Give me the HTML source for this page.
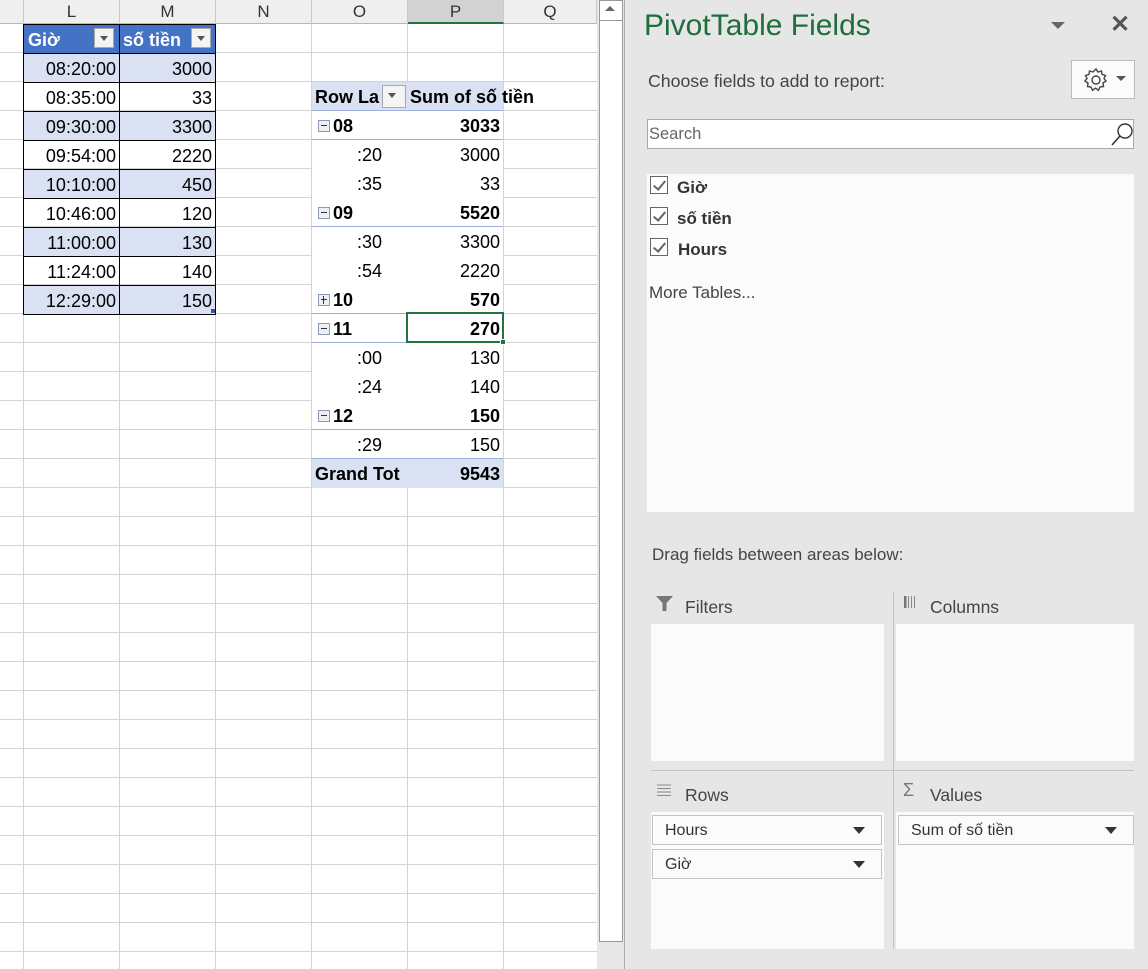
<!DOCTYPE html>
<html><head><meta charset="utf-8"><style>
*{margin:0;padding:0;box-sizing:border-box}
body{width:1148px;height:969px;position:relative;overflow:hidden;background:#fff;font-family:"Liberation Sans",sans-serif;}
.a{position:absolute}
.grid{left:0;top:24px;width:597px;height:945px;background:repeating-linear-gradient(to bottom,transparent 0 28px,#d4d4d4 28px 29px)}
.vl{position:absolute;top:0;width:1px;height:969px;background:#d4d4d4}
.ch{position:absolute;top:0;height:24px;background:#efefef;border-right:1px solid #c8c8c8;border-bottom:1px solid #b8b8b8;text-align:center;font-size:17px;line-height:24px;color:#333}
.c{position:absolute;height:29px;font-size:18px;line-height:30px;color:#000;white-space:nowrap}
.r{text-align:right;padding-right:3px}
.tb{border:1px solid #000}
.b{font-weight:bold}
.dd{position:absolute;width:20px;height:20px;border:1px solid #aaa;background:#f4f4f4}
.dd:after{content:"";position:absolute;left:5px;top:7px;border-left:4px solid transparent;border-right:4px solid transparent;border-top:5px solid #555}
.ex{position:absolute;width:12px;height:12px;border:1px solid #8a9ab8;background:#eef0f6;left:318px}
.ex:before{content:"";position:absolute;left:2px;top:4px;width:6px;height:1px;background:#333}
.pl:after{content:"";position:absolute;left:4px;top:1px;width:1px;height:8px;background:#333}
.pane{left:627px;top:0;width:521px;height:969px;background:#e6e6e6}
.pt{font-size:17px;color:#444}
.box{position:absolute;background:#fbfbfb}
.fld{position:absolute;height:30px;background:#fbfbfb;border:1px solid #c3c3c3;font-size:16px;line-height:30px;padding-left:12px;color:#333}
.fld:after{content:"";position:absolute;right:16px;top:11px;border-left:6px solid transparent;border-right:6px solid transparent;border-top:7px solid #333}
.cb{position:absolute;left:650px;width:18px;height:18px;border:1px solid #666;background:#fff}
.cb:after{content:"";position:absolute;left:5px;top:1px;width:5px;height:10px;border-right:2px solid #666;border-bottom:2px solid #666;transform:rotate(40deg)}
</style></head><body>
<div class="a grid"></div>
<div class="vl" style="left:23px"></div><div class="vl" style="left:119px"></div><div class="vl" style="left:215px"></div><div class="vl" style="left:311px"></div><div class="vl" style="left:407px"></div><div class="vl" style="left:503px"></div>
<div class="ch" style="left:0;width:24px"></div>
<div class="ch" style="left:24px;width:96px">L</div>
<div class="ch" style="left:120px;width:96px">M</div>
<div class="ch" style="left:216px;width:96px">N</div>
<div class="ch" style="left:312px;width:96px">O</div>
<div class="ch" style="left:408px;width:96px;background:#d2d2d2;border-bottom:2px solid #217346">P</div>
<div class="ch" style="left:504px;width:93px">Q</div>

<div class="c tb b" style="left:23px;top:24px;width:97px;height:30px;background:#4472c4;color:#fff;padding-left:4px">Giờ</div>
<div class="c tb b" style="left:119px;top:24px;width:97px;height:30px;background:#4472c4;color:#fff;padding-left:3px">số tiền</div>
<div class="dd" style="left:94px;top:28px"></div><div class="dd" style="left:191px;top:28px"></div>
<div class="c tb r" style="left:23px;top:53px;width:97px;height:30px;background:#d9e1f2">08:20:00</div><div class="c tb r" style="left:119px;top:53px;width:97px;height:30px;background:#d9e1f2">3000</div>
<div class="c tb r" style="left:23px;top:82px;width:97px;height:30px">08:35:00</div><div class="c tb r" style="left:119px;top:82px;width:97px;height:30px">33</div>
<div class="c tb r" style="left:23px;top:111px;width:97px;height:30px;background:#d9e1f2">09:30:00</div><div class="c tb r" style="left:119px;top:111px;width:97px;height:30px;background:#d9e1f2">3300</div>
<div class="c tb r" style="left:23px;top:140px;width:97px;height:30px">09:54:00</div><div class="c tb r" style="left:119px;top:140px;width:97px;height:30px">2220</div>
<div class="c tb r" style="left:23px;top:169px;width:97px;height:30px;background:#d9e1f2">10:10:00</div><div class="c tb r" style="left:119px;top:169px;width:97px;height:30px;background:#d9e1f2">450</div>
<div class="c tb r" style="left:23px;top:198px;width:97px;height:30px">10:46:00</div><div class="c tb r" style="left:119px;top:198px;width:97px;height:30px">120</div>
<div class="c tb r" style="left:23px;top:227px;width:97px;height:30px;background:#d9e1f2">11:00:00</div><div class="c tb r" style="left:119px;top:227px;width:97px;height:30px;background:#d9e1f2">130</div>
<div class="c tb r" style="left:23px;top:256px;width:97px;height:30px">11:24:00</div><div class="c tb r" style="left:119px;top:256px;width:97px;height:30px">140</div>
<div class="c tb r" style="left:23px;top:285px;width:97px;height:30px;background:#d9e1f2">12:29:00</div><div class="c tb r" style="left:119px;top:285px;width:97px;height:30px;background:#d9e1f2">150</div>
<div class="a" style="left:211px;top:309px;width:4px;height:4px;background:#3a55a0"></div>

<div class="a" style="left:312px;top:82px;width:191px;height:406px;background:#fff"></div>
<div class="a" style="left:312px;top:82px;width:191px;height:29px;background:#d9e1f2;border-bottom:1px solid #9bb0dc"></div>
<div class="c b" style="left:315px;top:82px;width:65px;overflow:hidden">Row Labels</div>
<div class="dd" style="left:382px;top:85px;width:24px;height:23px"></div>
<div class="c b" style="left:410px;top:82px">Sum of số tiền</div>
<div class="a" style="left:312px;top:139px;width:191px;height:1px;background:#9bb0dc"></div>
<div class="a" style="left:312px;top:226px;width:191px;height:1px;background:#9bb0dc"></div>
<div class="a" style="left:312px;top:313px;width:191px;height:1px;background:#9bb0dc"></div>
<div class="a" style="left:312px;top:342px;width:191px;height:1px;background:#9bb0dc"></div>
<div class="a" style="left:312px;top:429px;width:191px;height:1px;background:#9bb0dc"></div>
<div class="a" style="left:312px;top:458px;width:191px;height:30px;background:#d9e1f2;border-top:1px solid #9bb0dc"></div>

<div class="ex" style="top:120px"></div><div class="c b" style="left:333px;top:111px">08</div><div class="c b r" style="left:407px;top:111px;width:96px">3033</div>
<div class="c" style="left:357px;top:140px">:20</div><div class="c r" style="left:407px;top:140px;width:96px">3000</div>
<div class="c" style="left:357px;top:169px">:35</div><div class="c r" style="left:407px;top:169px;width:96px">33</div>
<div class="ex" style="top:207px"></div><div class="c b" style="left:333px;top:198px">09</div><div class="c b r" style="left:407px;top:198px;width:96px">5520</div>
<div class="c" style="left:357px;top:227px">:30</div><div class="c r" style="left:407px;top:227px;width:96px">3300</div>
<div class="c" style="left:357px;top:256px">:54</div><div class="c r" style="left:407px;top:256px;width:96px">2220</div>
<div class="ex pl" style="top:294px"></div><div class="c b" style="left:333px;top:285px">10</div><div class="c b r" style="left:407px;top:285px;width:96px">570</div>
<div class="ex" style="top:323px"></div><div class="c b" style="left:333px;top:314px">11</div><div class="c b r" style="left:407px;top:314px;width:96px">270</div>
<div class="c" style="left:357px;top:343px">:00</div><div class="c r" style="left:407px;top:343px;width:96px">130</div>
<div class="c" style="left:357px;top:372px">:24</div><div class="c r" style="left:407px;top:372px;width:96px">140</div>
<div class="ex" style="top:410px"></div><div class="c b" style="left:333px;top:401px">12</div><div class="c b r" style="left:407px;top:401px;width:96px">150</div>
<div class="c" style="left:357px;top:430px">:29</div><div class="c r" style="left:407px;top:430px;width:96px">150</div>
<div class="c b" style="left:315px;top:459px">Grand Tot</div><div class="c b r" style="left:407px;top:459px;width:96px">9543</div>
<div class="a" style="left:406px;top:312px;width:98px;height:31px;border:2px solid #217346"></div>
<div class="a" style="left:500px;top:339px;width:6px;height:6px;background:#217346;border:1px solid #fff"></div>

<div class="a" style="left:597px;top:0;width:30px;height:969px;background:#e8e8e8"></div>
<div class="a" style="left:599px;top:0;width:24px;height:942px;background:#fff;border:1px solid #999"></div>
<div class="a" style="left:599px;top:20px;width:24px;height:1px;background:#999"></div>
<div class="a" style="left:605px;top:6px;border-left:5px solid transparent;border-right:5px solid transparent;border-bottom:5px solid #666"></div>
<div class="a" style="left:624px;top:0;width:1px;height:969px;background:#aaa"></div>

<div class="a pane"></div>
<div class="a" style="left:644px;top:9px;font-size:30px;color:#1e6e3c">PivotTable Fields</div>
<div class="a" style="left:1051px;top:22px;border-left:7px solid transparent;border-right:7px solid transparent;border-top:7px solid #666"></div>
<div class="a" style="left:1110px;top:10px;font-size:24px;color:#555;font-weight:bold">✕</div>
<div class="a pt" style="left:648px;top:71px;font-size:17.7px">Choose fields to add to report:</div>
<div class="a" style="left:1071px;top:60px;width:64px;height:39px;background:#fbfbfb;border:1px solid #bbb"></div>
<svg class="a" style="left:1082px;top:66px" width="28" height="28" viewBox="0 0 28 28"><path d="M14 3l2 3 3.5-1 .5 3.5 3.5 1-1.5 3 2 2.5-3 2 .5 3.5-3.5.5-1.5 3.2-3-2-3 2-1.5-3.2-3.5-.5.5-3.5-3-2 2-2.5-1.5-3 3.5-1 .5-3.5 3.5 1z" fill="none" stroke="#444" stroke-width="1.4"/><circle cx="14" cy="14" r="4" fill="none" stroke="#444" stroke-width="1.4"/></svg>
<div class="a" style="left:1116px;top:76px;border-left:5px solid transparent;border-right:5px solid transparent;border-top:5px solid #555"></div>
<div class="a" style="left:647px;top:119px;width:487px;height:30px;background:#fff;border:1px solid #aaa"></div>
<div class="a" style="left:649px;top:125px;font-size:16.5px;color:#666">Search</div>
<svg class="a" style="left:1110px;top:121px" width="24" height="26"><circle cx="15" cy="10" r="7" fill="none" stroke="#333" stroke-width="1.4"/><line x1="10" y1="15" x2="2" y2="24" stroke="#333" stroke-width="1.6"/></svg>
<div class="box" style="left:647px;top:174px;width:487px;height:338px"></div>
<div class="cb" style="top:176px"></div><div class="a b" style="left:677px;top:178px;font-size:17px;color:#333">Giờ</div>
<div class="cb" style="top:207px"></div><div class="a b" style="left:677px;top:209px;font-size:17px;color:#333">số tiền</div>
<div class="a cb" style="top:238px"></div><div class="a b" style="left:678px;top:240px;font-size:17px;color:#333">Hours</div>
<div class="a pt" style="left:649px;top:283px;font-size:17px">More Tables...</div>
<div class="a pt" style="left:652px;top:545px">Drag fields between areas below:</div>

<svg class="a" style="left:655px;top:594px" width="20" height="20"><path d="M1 2h17l-6.5 7v8h-4v-8z" fill="#777"/></svg>
<div class="a pt" style="left:685px;top:597px;font-size:17.5px">Filters</div>
<svg class="a" style="left:903px;top:594px" width="16" height="16"><rect x="1" y="2" width="2.5" height="12" fill="#777"/><rect x="5" y="2" width="1" height="12" fill="#888"/><rect x="8" y="2" width="1" height="12" fill="#888"/><rect x="11" y="2" width="1" height="12" fill="#888"/></svg>
<div class="a pt" style="left:930px;top:597px;font-size:17.5px">Columns</div>
<div class="box" style="left:651px;top:624px;width:233px;height:137px"></div>
<div class="box" style="left:896px;top:624px;width:238px;height:137px"></div>
<div class="a" style="left:651px;top:770px;width:483px;height:1px;background:#c3c3c3"></div>
<div class="a" style="left:893px;top:592px;width:1px;height:357px;background:#c3c3c3"></div>
<svg class="a" style="left:656px;top:784px" width="16" height="14"><path d="M1 1h14M1 4.5h14M1 8h14M1 11.5h14" stroke="#888" stroke-width="1"/></svg>
<div class="a pt" style="left:685px;top:785px;font-size:17.5px">Rows</div>
<div class="a" style="left:903px;top:780px;font-size:18px;color:#777">Σ</div>
<div class="a pt" style="left:930px;top:785px;font-size:17.5px">Values</div>
<div class="box" style="left:651px;top:812px;width:233px;height:137px"></div>
<div class="box" style="left:896px;top:812px;width:238px;height:137px"></div>
<div class="fld" style="left:652px;top:815px;width:230px">Hours</div>
<div class="fld" style="left:652px;top:849px;width:230px">Giờ</div>
<div class="fld" style="left:898px;top:815px;width:236px">Sum of số tiền</div>
</body></html>
